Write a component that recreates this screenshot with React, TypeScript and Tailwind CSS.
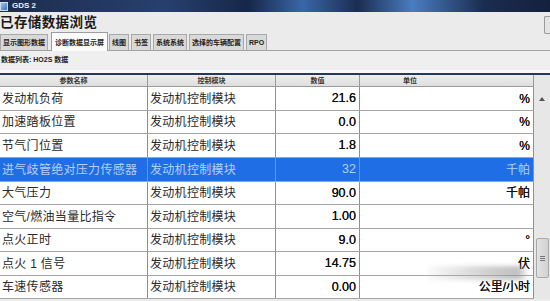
import React from "react";

const CJK = "font-['Liberation_Sans','Noto_Sans_CJK_SC',sans-serif]";

type Row = { name: string; mod: string; val: string; unit: string; h: string; sel?: boolean };

const rows: Row[] = [
  { name: "发动机负荷", mod: "发动机控制模块", val: "21.6", unit: "%", h: "h-[24px]" },
  { name: "加速踏板位置", mod: "发动机控制模块", val: "0.0", unit: "%", h: "h-[23px]" },
  { name: "节气门位置", mod: "发动机控制模块", val: "1.8", unit: "%", h: "h-[24px]" },
  { name: "进气歧管绝对压力传感器", mod: "发动机控制模块", val: "32", unit: "千帕", h: "h-[24px]", sel: true },
  { name: "大气压力", mod: "发动机控制模块", val: "90.0", unit: "千帕", h: "h-[23px]" },
  { name: "空气/燃油当量比指令", mod: "发动机控制模块", val: "1.00", unit: "", h: "h-[24px]" },
  { name: "点火正时", mod: "发动机控制模块", val: "9.0", unit: "°", h: "h-[23px]" },
  { name: "点火 1 信号", mod: "发动机控制模块", val: "14.75", unit: "伏", h: "h-[24px]" },
  { name: "车速传感器", mod: "发动机控制模块", val: "0.00", unit: "公里/小时", h: "h-[23px]" },
];

const tabs = ["显示图形数据", "诊断数据显示屏", "线图", "书签", "系统系统", "选择的车辆配置", "RPO"];

export default function App() {
  return (
    <div className={`relative w-[550px] h-[301px] overflow-hidden bg-[#ebebeb] ${CJK}`}>
      {/* title bar */}
      <div className="h-[12px] flex items-center gap-[4px] bg-[linear-gradient(90deg,#1d2c4e_0%,#27406e_30%,#162748_45%,#3a66a8_55%,#1b2d52_65%,#4a7cc0_75%,#1a2c50_88%,#14213d_100%)]">
        <div className="w-[8px] h-[9px] bg-[linear-gradient(135deg,#9fc3f0,#3a70c0)] border border-[#cde]" />
        <span className="text-[8px] leading-none text-[#e8eef8] font-bold">GDS 2</span>
      </div>
      {/* heading */}
      <div className="h-[21px] flex items-center justify-between">
        <span className="text-[13.5px] text-[#1a1a1a] leading-none font-bold tracking-[0.4px]">已存储数据浏览</span>
        <div className="w-[6px] h-[18px] mt-[4px] border border-[#9a9a9a] border-r-0 rounded-l-[2px] bg-[#e4e4e4]" />
      </div>
      {/* tabs */}
      <div className="h-[18px] flex items-end border-b border-[#a3a3a3]">
        {tabs.map((t, i) => {
          const sel = i === 1;
          return (
            <div
              key={t}
              className={
                sel
                  ? "h-[19px] -mb-px mx-[1px] px-[3px] flex items-center bg-[#fbfbfb] border border-b-0 border-[#9c9c9c] text-[7px] font-bold text-[#222] leading-none"
                  : "h-[16px] mr-[2px] px-[2px] flex items-center bg-[#d9d9d9] border border-b-0 border-[#a8a8a8] text-[7px] font-bold text-[#222] leading-none"
              }
            >
              {t}
            </div>
          );
        })}
      </div>
      {/* data list label */}
      <div className="h-[22px] bg-[#efefef] flex items-start pt-[5px] border-b-[3px] border-[#f6f8fb]">
        <span className="text-[7px] font-bold text-[#222] leading-none pl-[1px]">数据列表: HO2S 数据</span>
      </div>
      {/* table */}
      <div className="flex border-t-2 border-[#27385a]">
        <div className="w-[534px] flex flex-col">
          <div className="h-[12px] grid grid-cols-[148px_128px_84px_174px] bg-[linear-gradient(#eeeeee,#dedede)] border-b border-[#9a9a9a]">
            <div className="border-r border-[#9a9a9a] flex items-center justify-center text-[7px] font-bold text-[#333] leading-none">参数名称</div>
            <div className="border-r border-[#9a9a9a] flex items-center justify-center text-[7px] font-bold text-[#333] leading-none">控制模块</div>
            <div className="border-r border-[#9a9a9a] flex items-center justify-center text-[7px] font-bold text-[#333] leading-none">数值</div>
            <div className="border-r border-[#9a9a9a] flex items-center text-[7px] font-bold text-[#333] leading-none pl-[43px]">单位</div>
          </div>
          {rows.map((r) => (
            <div
              key={r.name}
              className={`${r.h} grid grid-cols-[148px_128px_84px_174px] border-b border-[#a5a5a5] ${r.sel ? "bg-[#1f6ee6] text-[#b5cff8]" : "bg-white text-[#2a2a2a]"}`}
            >
              <div className="border-r border-[#8f8f8f] flex items-center pl-[2px] text-[12px] tracking-[0.3px] leading-none whitespace-nowrap overflow-hidden">{r.name}</div>
              <div className="border-r border-[#8f8f8f] flex items-center pl-[2px] text-[12px] tracking-[0.3px] leading-none whitespace-nowrap">{r.mod}</div>
              <div className={`border-r border-[#8f8f8f] flex items-center justify-end pr-[3px] text-[12.5px] leading-none ${r.sel ? "" : "text-[#111] [text-shadow:0_0_0.6px_#000]"}`}>{r.val}</div>
              <div className={`border-r border-[#8f8f8f] flex items-center justify-end pr-[3px] text-[12px] leading-none ${r.sel ? "" : "text-[#111] [text-shadow:0_0_0.6px_#000]"}`}>{r.unit}</div>
            </div>
          ))}
        </div>
        {/* scrollbar */}
        <div className="w-[16px] bg-[#e7e7e7] relative">
          <div className="absolute left-[5px] top-[22px] w-0 h-0 border-l-[3px] border-r-[3px] border-b-[4px] border-l-transparent border-r-transparent border-b-[#555]" />
          <div className="absolute left-[2px] top-[163px] w-[13px] h-[40px] bg-[linear-gradient(90deg,#e2e2e2,#d2d2d2)] border border-[#a9a9a9] rounded-[2px] flex flex-col items-center justify-center gap-[1px]">
            <div className="w-[5px] h-px bg-[#777]" />
            <div className="w-[5px] h-px bg-[#777]" />
            <div className="w-[5px] h-px bg-[#777]" />
          </div>
        </div>
      </div>
      {/* watermark smear */}
      <div className="absolute left-[428px] top-[266px] w-[100px] h-[14px] bg-[linear-gradient(90deg,rgba(200,200,200,0.1),rgba(170,170,170,0.55)_60%,rgba(150,150,150,0.6)_90%,rgba(200,200,200,0.1))] blur-[2px]" />
    </div>
  );
}
